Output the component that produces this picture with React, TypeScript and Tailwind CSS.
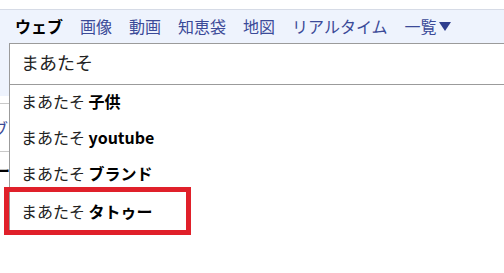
const tabs = ['画像', '動画', '知恵袋', '地図', 'リアルタイム'];

const suggestions = ['子供', 'youtube', 'ブランド', 'タトゥー'];

export default function App() {
  return (
    <div
      className="relative w-[504px] h-[273px] overflow-hidden bg-white"
      style={{ fontFamily: '"Noto Sans CJK JP", "Noto Sans", sans-serif' }}
    >
      {/* Page behind the suggest box */}
      <div className="h-[9px] bg-white" />
      <div className="h-[87px] border-t border-[#d6dbe6] bg-[#eef3fd]">
        <nav className="flex items-center gap-[17px] h-[32px] pl-[15px] text-[16px] leading-none">
          <span className="font-bold text-black">ウェブ</span>
          {tabs.map((t) => (
            <span key={t} className="text-[#3b4a98]">
              {t}
            </span>
          ))}
          <span className="flex items-center gap-[2px] text-[#3b4a98]">
            一覧
            <svg width="12" height="9" viewBox="0 0 12 9">
              <path d="M0 0h12L6 9z" fill="#2f3f8f" />
            </svg>
          </span>
        </nav>
      </div>
      <div className="h-[7px]" />
      <div className="border-t border-[#c9c9c9] h-[48px] flex items-center -ml-[8px] text-[16px] text-[#3b4a98]">
        ブ
      </div>
      <div className="border-t border-[#c9c9c9] h-[40px] flex items-center pb-[4px] -ml-[6px] text-[16px] font-bold text-black">
        ー
      </div>

      {/* Search box + suggestions */}
      <div className="absolute left-[9px] top-[43px] w-[520px]">
        <div className="h-[42px] border-t border-b border-l border-[#9b9b9b] bg-white flex items-center pl-[11px] pb-[3px] text-[18px] text-[#222]">
          まあたそ
        </div>
        <ul className="border-l border-[#9b9b9b] bg-white h-[147px]">
          {suggestions.map((s, i) => (
            <li
              key={s}
              className={`flex items-center pl-[11px] pb-[4px] text-[16px] text-[#222] ${i === 3 ? 'h-[39px]' : 'h-[36px]'}`}
            >
              まあたそ&nbsp;<b className="font-bold text-black">{s}</b>
            </li>
          ))}
        </ul>
      </div>

      {/* Highlight box */}
      <div className="absolute left-[4px] top-[187px] w-[187px] h-[48px] border-[5px] border-[#e0202a]" />
    </div>
  );
}
